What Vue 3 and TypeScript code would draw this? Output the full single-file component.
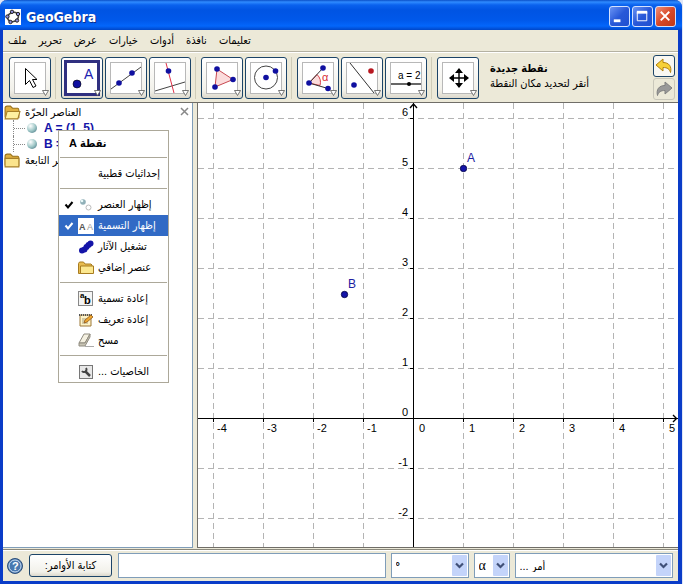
<script setup lang="ts">
import { computed, onBeforeUnmount, onMounted, ref } from 'vue'

interface Tool {
  id: string
  label: string
}

interface MenuEntry {
  id: string
  label: string
  checked?: boolean
  active?: boolean
}

const menus: string[] = ['ملف', 'تحرير', 'عرض', 'خيارات', 'أدوات', 'نافذة', 'تعليمات']

const toolGroups: Tool[][] = [
  [{ id: 'move', label: 'تحريك' }],
  [
    { id: 'point', label: 'نقطة جديدة' },
    { id: 'line', label: 'مستقيم' },
    { id: 'perpendicular', label: 'عمودي' },
  ],
  [
    { id: 'polygon', label: 'مضلع' },
    { id: 'circle', label: 'دائرة' },
  ],
  [
    { id: 'angle', label: 'زاوية' },
    { id: 'mirror', label: 'انعكاس' },
    { id: 'slider', label: 'منزلقة' },
  ],
  [{ id: 'pan', label: 'تحريك اللوحة' }],
]
const selectedTool = ref('point')

const contextSections: MenuEntry[][] = [
  [{ id: 'polar', label: 'إحداثيات قطبية' }],
  [
    { id: 'show', label: 'إظهار العنصر', checked: true },
    { id: 'label', label: 'إظهار التسمية', checked: true, active: true },
    { id: 'trace', label: 'تشغيل الآثار' },
    { id: 'aux', label: 'عنصر إضافي' },
  ],
  [
    { id: 'rename', label: 'إعادة تسمية' },
    { id: 'redefine', label: 'إعادة تعريف' },
    { id: 'erase', label: 'مسح' },
  ],
  [{ id: 'props', label: 'الخاصيات ...' }],
]

// Coordinate system of the drawing pad, in pixels per unit
const unit = 50
const origin = { x: 215, y: 315 }
const px = (x: number): number => origin.x + x * unit
const py = (y: number): number => origin.y - y * unit
const range = (from: number, to: number): number[] =>
  Array.from({ length: Math.max(0, to - from + 1) }, (_, i) => from + i)

const plot = ref<SVGSVGElement | null>(null)
const size = ref({ width: 480, height: 446 })
const gridX = computed(() => range(-4, Math.floor((size.value.width - origin.x - 13) / unit)))
const gridY = computed(() => range(-Math.floor((size.value.height - origin.y - 4) / unit), 6))
const points = [
  { name: 'A', x: 265, y: 65 },
  { name: 'B', x: 146, y: 191 },
]

let observer: ResizeObserver | undefined
function measure(): void {
  const box = plot.value?.getBoundingClientRect()
  if (box) size.value = { width: box.width, height: box.height }
}
onMounted(() => {
  measure()
  observer = new ResizeObserver(measure)
  if (plot.value) observer.observe(plot.value)
})
onBeforeUnmount(() => observer?.disconnect())

const command = ref('')
const degree = ref('°')
const greek = ref('α')
const commandList = ref('cmd')
</script>

<template>
  <div class="window">
    <header class="title-bar">
      <svg class="logo" viewBox="0 0 16 16" aria-hidden="true">
        <rect width="16" height="16" fill="#fff" />
        <ellipse cx="8" cy="8" rx="5.5" ry="4.6" fill="none" stroke="#444" stroke-width="1.6" transform="rotate(-20 8 8)" />
        <g fill="#8c8cdc" stroke="#222" stroke-width="1">
          <circle cx="7" cy="2.8" r="1.7" /><circle cx="13" cy="5" r="1.7" />
          <circle cx="12" cy="11.5" r="1.7" /><circle cx="5.5" cy="13" r="1.7" />
          <circle cx="2.4" cy="7.6" r="1.7" />
        </g>
      </svg>
      <h1>GeoGebra</h1>
      <div class="window-buttons">
        <button type="button" aria-label="تصغير">
          <svg viewBox="0 0 20 20"><rect x="4" y="13" width="7" height="3" fill="#fff" /></svg>
        </button>
        <button type="button" aria-label="تكبير">
          <svg viewBox="0 0 20 20"><path d="M4.5 5.500h10v9h-10z" fill="none" stroke="#fff" /><path d="M4 4h11v3H4z" fill="#fff" /></svg>
        </button>
        <button type="button" class="close" aria-label="إغلاق">
          <svg viewBox="0 0 20 20"><path d="M5 5l9 9M14 5l-9 9" stroke="#fff" stroke-width="2" /></svg>
        </button>
      </div>
    </header>

    <nav class="menu-bar">
      <button v-for="menu in menus" :key="menu" type="button" dir="rtl">{{ menu }}</button>
    </nav>

    <div class="tool-bar">
      <div v-for="(group, g) in toolGroups" :key="g" class="tool-group">
        <button
          v-for="tool in group"
          :key="tool.id"
          type="button"
          class="tool"
          :class="{ selected: tool.id === selectedTool }"
          :aria-label="tool.label"
          @click="selectedTool = tool.id"
        >
          <svg viewBox="0 0 40 40">
            <rect x="4.5" y="4.5" width="31" height="31" fill="#fff" stroke="#b8b8b8" />
            <rect v-if="tool.id === selectedTool" x="3.5" y="3.5" width="33" height="33" fill="#fff" stroke="#303080" stroke-width="3" />
            <path v-if="tool.id === 'move'" d="M15.500 10.500v16l4-4 3.500 7 3-1.500-3.500-6.500h4.500z" fill="#fff" stroke="#000" />
            <template v-else-if="tool.id === 'point'">
              <circle cx="15" cy="26" r="4" fill="#1010a0" stroke="#000" stroke-width=".6" />
              <text x="22" y="21" font-size="14" fill="#2020b0">A</text>
            </template>
            <template v-else-if="tool.id === 'line'">
              <path d="M5 31L35 9" stroke="#444" />
              <circle cx="13" cy="25" r="2.8" fill="#1010a0" /><circle cx="26" cy="15" r="2.8" fill="#1010a0" />
            </template>
            <template v-else-if="tool.id === 'perpendicular'">
              <path d="M5 33l30-9" stroke="#444" /><path d="M16 5l8 30" stroke="#e03048" />
              <circle cx="18.5" cy="13" r="2.8" fill="#1010a0" />
            </template>
            <template v-else-if="tool.id === 'polygon'">
              <path d="M15 11l16 10.500-18 7.500z" fill="#fbdcdc" stroke="#c84850" />
              <circle cx="15" cy="11" r="2.8" fill="#1010a0" /><circle cx="31" cy="21.5" r="2.8" fill="#1010a0" /><circle cx="13" cy="29" r="2.8" fill="#1010a0" />
            </template>
            <template v-else-if="tool.id === 'circle'">
              <circle cx="20" cy="19.5" r="11.5" fill="none" stroke="#444" />
              <circle cx="20" cy="19.5" r="2.8" fill="#1010a0" /><circle cx="29.5" cy="13" r="2.8" fill="#1010a0" />
            </template>
            <template v-else-if="tool.id === 'angle'">
              <path d="M11 25l8-8.500a11 11 0 0 1 3 11z" fill="#fbdcdc" stroke="#d84048" />
              <path d="M25 10L11 25l19 5.500" fill="none" stroke="#333" />
              <circle cx="25" cy="10" r="2.8" fill="#1010a0" /><circle cx="11" cy="25" r="2.8" fill="#1010a0" /><circle cx="30" cy="30.5" r="2.8" fill="#1010a0" />
              <text x="24" y="23" font-size="11" fill="#d83038">α</text>
            </template>
            <template v-else-if="tool.id === 'mirror'">
              <path d="M8 5l24 30" stroke="#333" />
              <circle cx="12" cy="27" r="2.8" fill="#1010a0" /><circle cx="29" cy="13" r="2.8" fill="#b81820" />
            </template>
            <template v-else-if="tool.id === 'slider'">
              <text x="12" y="21" font-size="10" fill="#000">a = 2</text>
              <path d="M5 26h30" stroke="#000" stroke-width="1.2" /><circle cx="23" cy="26" r="2" />
            </template>
            <template v-else>
              <path d="M12 20h18M21 11v18" stroke="#000" stroke-width="1.4" />
              <path d="M11 20l5-4v8zM31 20l-5-4v8zM21 10l-4 5h8zM21 30l-4-5h8z" />
            </template>
            <path d="M32.500 32.500h6l-3 5z" fill="#fff" stroke="#555" stroke-width=".8" />
          </svg>
        </button>
      </div>
      <div class="tool-help" dir="rtl">
        <strong>نقطة جديدة</strong>
        <span>أنقر لتحديد مكان النقطة</span>
      </div>
      <div class="history">
        <button type="button" aria-label="تراجع">
          <svg viewBox="0 0 20 20"><path d="M2 9l7-6v3.500c6 0 9 4 7.500 10-1-3.500-3-5-7.500-5V15z" fill="#f6d038" stroke="#b08010" /></svg>
        </button>
        <button type="button" disabled aria-label="إعادة">
          <svg viewBox="0 0 20 20"><path d="M18 9l-7-6v3.500c-6 0-9 4-7.500 10 1-3.500 3-5 7.500-5V15z" fill="#999" stroke="#808080" /></svg>
        </button>
      </div>
    </div>

    <main class="workspace">
      <aside class="algebra">
        <button type="button" class="close-panel" aria-label="إغلاق">
          <svg viewBox="0 0 9 9"><path d="M1 1l7 7M8 1l-7 7" stroke="#888" stroke-width="1.5" /></svg>
        </button>
        <div class="tree-row">
          <svg class="folder" viewBox="0 0 16 14"><path d="M1 3q0-2 2-2h3l2 2h5q1 0 1 2v7H2q-1 0-1-1z" fill="#e0b040" stroke="#987018" /><path d="M3 6h12l-2 7H1z" fill="#fff0a0" stroke="#a88028" /></svg>
          <span dir="rtl">العناصر الحرّة</span>
        </div>
        <ul class="tree-children">
          <li><i class="marble"></i><b>A = (1, 5)</b></li>
          <li><i class="marble"></i><b>B =</b></li>
        </ul>
        <div class="tree-row">
          <svg class="folder" viewBox="0 0 16 14"><path d="M1 3q0-2 2-2h3l2 2h5q1 0 1 2v7H2q-1 0-1-1z" fill="#e0b040" stroke="#987018" /><path d="M1 5h13v8H1z" fill="#fbe48c" stroke="#a88028" /></svg>
          <span dir="rtl">العناصر التابعة</span>
        </div>

        <div class="context-menu" role="menu">
          <div class="context-title" dir="rtl">نقطة A</div>
          <div v-for="(section, s) in contextSections" :key="s" class="context-section">
            <button
              v-for="entry in section"
              :key="entry.id"
              type="button"
              role="menuitem"
              :class="{ active: entry.active }"
            >
              <svg class="check" viewBox="0 0 10 10"><path v-if="entry.checked" d="M1.500 4.500l2.500 3 4.500-5.500" fill="none" stroke="currentColor" stroke-width="2" /></svg>
              <svg class="entry-icon" viewBox="0 0 16 16">
                <template v-if="entry.id === 'show'">
                  <circle cx="5" cy="5" r="2.8" fill="#90b0b8" /><circle cx="4" cy="4" r="1.3" fill="#e8f8f8" />
                  <circle cx="10.5" cy="10.5" r="2.5" fill="#fff" stroke="#bbb" />
                </template>
                <template v-else-if="entry.id === 'label'">
                  <rect width="16" height="16" fill="#fff" />
                  <text x="1" y="12" font-size="9" font-weight="bold" fill="#555">A</text>
                  <text x="9" y="12" font-size="9" fill="#999">A</text>
                </template>
                <g v-else-if="entry.id === 'trace'" fill="#1414a8">
                  <circle cx="4" cy="11.5" r="3" /><circle cx="6.5" cy="10.5" r="3" /><circle cx="8.5" cy="8" r="3" />
                  <circle cx="10.5" cy="6" r="3" /><circle cx="12.5" cy="4.5" r="3" />
                </g>
                <template v-else-if="entry.id === 'aux'">
                  <path d="M.5 13.500v-10l1-1.500h4l1.500 2H13l1 1v8.500z" fill="#e8bc50" stroke="#a87c20" />
                  <path d="M2.500 6H15.500v7.500h-13z" fill="#fce890" stroke="#a87c20" />
                </template>
                <template v-else-if="entry.id === 'rename'">
                  <rect x=".5" y=".5" width="14" height="14" fill="#f4f4f4" stroke="#888" />
                  <text x="2" y="7" font-size="8" font-weight="bold">a</text>
                  <text x="6" y="13" font-size="11" font-weight="bold">b</text>
                </template>
                <template v-else-if="entry.id === 'redefine'">
                  <path d="M2 3h11v11H2z" fill="#fff4c8" stroke="#9c7838" /><path d="M1 3h13" stroke="#555" stroke-width="2" stroke-dasharray="1 1" />
                  <path d="M4 7h6M4 9h5M4 11h6" stroke="#a8a080" /><path d="M6 11l1-3 6-5 2 2-6 5z" fill="#f0a830" stroke="#905818" stroke-width=".8" />
                </template>
                <template v-else-if="entry.id === 'erase'">
                  <path d="M1 10l5-9h6l-5 9z" fill="#f4f0e0" stroke="#908c80" /><path d="M1 10h6l5-9v3l-5 9H1z" fill="#c8c4b4" stroke="#908c80" /><path d="M7 13.500h9" stroke="#aaa" />
                </template>
                <template v-else-if="entry.id === 'props'">
                  <rect x="1.5" y="1.5" width="13" height="13" fill="#e8e8e8" stroke="#777" />
                  <path d="M7 7l5 5" stroke="#444" stroke-width="2.5" /><path d="M8 4a2.500 2.500 0 1 1-4 3" fill="none" stroke="#444" stroke-width="2" />
                </template>
              </svg>
              <span dir="rtl">{{ entry.label }}</span>
            </button>
          </div>
        </div>
      </aside>

      <section class="graphics">
        <svg ref="plot" class="plot" shape-rendering="crispEdges" role="img" aria-label="A, B">
          <g stroke="#b4b4b4" stroke-dasharray="6 4">
            <line v-for="x in gridX" :key="'x' + x" :x1="px(x) + 0.5" :x2="px(x) + 0.5" y1="0" y2="100%" />
            <line v-for="y in gridY" :key="'y' + y" x1="0" x2="100%" :y1="py(y) + 0.5" :y2="py(y) + 0.5" />
          </g>
          <g stroke="#000">
            <line x1="0" x2="100%" :y1="origin.y + 0.5" :y2="origin.y + 0.5" />
            <line :x1="origin.x + 0.5" :x2="origin.x + 0.5" y1="0" y2="100%" />
            <line v-for="x in gridX" :key="'tx' + x" :x1="px(x) + 0.5" :x2="px(x) + 0.5" :y1="origin.y" :y2="origin.y + 4" />
            <line v-for="y in gridY" :key="'ty' + y" :x1="origin.x - 3" :x2="origin.x" :y1="py(y) + 0.5" :y2="py(y) + 0.5" />
          </g>
          <g fill="none" stroke="#000" stroke-width="1.4" shape-rendering="auto">
            <path d="M212 5l3.500-4 3.500 4" />
            <svg x="100%" :y="origin.y" overflow="visible"><path d="M-5 -3l3.500 3.500-3.500 3.500" /></svg>
          </g>
          <g class="axis-numbers">
            <text v-for="x in gridX" :key="'nx' + x" :x="px(x) + (x < 0 ? 4 : 6)" :y="origin.y + 14">{{ x }}</text>
            <text v-for="y in gridY" :key="'ny' + y" :x="origin.x - 5" :y="py(y) - 2" text-anchor="end">{{ y }}</text>
          </g>
          <g shape-rendering="auto">
            <template v-for="p in points" :key="p.name">
              <circle :cx="p.x + 0.5" :cy="p.y + 0.5" r="3.2" fill="#1414a8" stroke="#000040" stroke-width=".8" />
              <text class="point-name" :x="p.x + 4" :y="p.y - 6">{{ p.name }}</text>
            </template>
          </g>
        </svg>
      </section>
    </main>

    <footer class="input-bar">
      <button type="button" class="help" aria-label="مساعدة">
        <svg viewBox="0 0 16 16"><circle cx="8" cy="8" r="7.5" fill="#4878b0" stroke="#305078" /><circle cx="8" cy="8" r="6" fill="none" stroke="#c8dcf0" /><text x="5" y="12" font-size="11" font-weight="bold" fill="#fff">?</text></svg>
      </button>
      <button type="button" class="command-label" dir="rtl">كتابة الأوامر:</button>
      <input v-model="command" type="text" class="command" aria-label="كتابة الأوامر" />
      <span class="combo degree">
        <select v-model="degree" aria-label="رموز"><option value="°">°</option></select>
        <svg viewBox="0 0 15 21"><rect width="15" height="21" rx="1" fill="#c4d4fa" /><path d="M4 8.500l3.500 3.500L11 8.500" fill="none" stroke="#405078" stroke-width="2.2" /></svg>
      </span>
      <span class="combo greek">
        <select v-model="greek" aria-label="حروف"><option value="α">α</option></select>
        <svg viewBox="0 0 15 21"><rect width="15" height="21" rx="1" fill="#c4d4fa" /><path d="M4 8.500l3.500 3.500L11 8.500" fill="none" stroke="#405078" stroke-width="2.2" /></svg>
      </span>
      <span class="combo commands">
        <select v-model="commandList" aria-label="أمر"><option value="cmd">&rlm;أمر ...&rlm;</option></select>
        <svg viewBox="0 0 15 21"><rect width="15" height="21" rx="1" fill="#c4d4fa" /><path d="M4 8.500l3.500 3.500L11 8.500" fill="none" stroke="#405078" stroke-width="2.2" /></svg>
      </span>
    </footer>
  </div>
</template>

<style>
body {
  background: #dfe6f6;
}
</style>

<style scoped>
.window {
  display: flex;
  flex-direction: column;
  box-sizing: border-box;
  min-height: 100vh;
  margin-right: 1px;
  border: solid #0a3cc8;
  border-width: 0 4px 3px 3px;
  border-radius: 7px 7px 0 0;
  background: #ece9d8;
  color: #000;
  font-family: "Liberation Sans", "DejaVu Sans Condensed", "DejaVu Sans", sans-serif;
  font-size: 11px;
}
button,
input,
select {
  box-sizing: border-box;
  margin: 0;
  padding: 0;
  border: 0;
  border-radius: 0;
  background: none;
  color: inherit;
  font: inherit;
}
svg {
  display: block;
  flex: none;
}
.title-bar {
  display: flex;
  align-items: center;
  gap: 5px;
  height: 30px;
  box-sizing: border-box;
  margin: 0 -4px 0 -3px;
  padding: 3px 6px 0 5px;
  border-radius: 7px 7px 0 0;
  background: linear-gradient(#0a50c8 0, #2f8bff 2px, #0a62ee 5px, #0054e3 10px, #0058ea 20px, #0366fb 26px, #0046c8 30px);
}
.logo {
  width: 16px;
  height: 16px;
}
h1 {
  flex: 1;
  margin: 0;
  color: #fff;
  font: bold 14px "DejaVu Sans Condensed", "DejaVu Sans", sans-serif;
  text-shadow: 1px 1px #0a3090;
}
.window-buttons {
  display: flex;
  gap: 2px;
}
.window-buttons button {
  width: 21px;
  height: 21px;
  border: 1px solid #d4e2ff;
  border-radius: 3px;
  background: linear-gradient(135deg, #6a94f4, #2858d8 50%, #2050d0);
}
.window-buttons .close {
  background: linear-gradient(135deg, #f09078, #d84828 50%, #c03818);
}
.menu-bar {
  display: flex;
  align-items: center;
  gap: 12px;
  height: 21px;
  padding: 0 5px;
  border-bottom: 1px solid #b4b1a2;
}
.tool-bar {
  display: flex;
  align-items: center;
  height: 49px;
  padding: 0 3px 0 6px;
  border-top: 1px solid #fff;
  border-bottom: 1px solid #706e68;
}
.tool-group {
  display: flex;
  gap: 2px;
}
.tool-group + .tool-group {
  margin-left: 4px;
  padding-left: 5px;
  border-left: 1px solid #cfccb8;
}
.tool {
  width: 42px;
  height: 42px;
  border: 1px solid #1c4468;
  border-radius: 3px;
  background: linear-gradient(#fff, #f2f1ea 80%, #dcd8cc);
}
.tool-help {
  display: flex;
  flex: 1;
  flex-direction: column;
  align-items: flex-end;
  margin-left: 11px;
  padding-bottom: 4px;
  line-height: 15px;
  white-space: nowrap;
}
.history {
  display: flex;
  flex-direction: column;
  gap: 1px;
}
.history button {
  width: 22px;
  height: 22px;
  border: 1px solid #1c4468;
  border-radius: 3px;
  background: #f8f7f2;
}
.history button:disabled {
  border-color: #c9c7ba;
  background: #ece9d8;
}
.workspace {
  display: flex;
  flex: 1;
  padding-bottom: 1px;
}
.algebra {
  position: relative;
  box-sizing: border-box;
  width: 190px;
  padding: 1px 1px 0;
  border: solid #7f9db9;
  border-width: 0 1px 1px 0;
  background: #fff;
}
.close-panel {
  position: absolute;
  top: 4px;
  right: 3px;
}
.close-panel svg {
  width: 9px;
  height: 9px;
}
.tree-row {
  display: flex;
  align-items: center;
  gap: 4px;
  height: 16px;
}
.folder {
  width: 17px;
  height: 15px;
}
.tree-children {
  margin: 0 0 0 9px;
  padding: 0;
  list-style: none;
}
.tree-children li {
  display: flex;
  align-items: center;
  height: 16px;
  border-left: 1px dotted #888;
  color: #1414a8;
  font-size: 12px;
}
.tree-children li::before {
  width: 11px;
  border-top: 1px dotted #888;
  content: "";
}
.marble {
  width: 10px;
  height: 10px;
  margin: 0 7px 0 2px;
  border-radius: 50%;
  background: radial-gradient(circle at 35% 30%, #fff, #a0c8c8 50%, #386878);
}
.context-menu {
  position: absolute;
  top: 27px;
  left: 55px;
  box-sizing: border-box;
  width: 111px;
  border: 1px solid #aca899;
  background: #fff;
}
.context-title {
  height: 22px;
  padding: 0 0 0 10px;
  font-weight: bold;
  line-height: 24px;
  text-align: left;
}
.context-section::before {
  display: block;
  height: 1px;
  margin: 4px 1px 5px;
  background: #aca899;
  content: "";
}
.context-section button {
  display: flex;
  align-items: center;
  width: 100%;
  height: 21px;
  padding-left: 5px;
  white-space: nowrap;
}
.context-section .active {
  background: #316ac5;
  color: #fff;
}
.check {
  width: 10px;
  height: 10px;
}
.entry-icon {
  width: 16px;
  height: 16px;
  margin: 0 4px;
}
.graphics {
  display: flex;
  flex: 1;
  min-width: 0;
  margin-left: 4px;
  border: solid #706e68;
  border-width: 0 0 1px 1px;
  background: #fff;
}
.plot {
  flex: 1;
  min-width: 0;
  height: auto;
}
.axis-numbers {
  font-size: 11px;
}
.point-name {
  fill: #2020a0;
  font-size: 12px;
}
.input-bar {
  display: flex;
  align-items: center;
  height: 31px;
  padding: 0 5px 0 4px;
  border-top: 1px solid #8a887c;
  box-shadow: inset 0 1px #fff;
}
.help svg {
  width: 16px;
  height: 16px;
}
.command-label {
  width: 83px;
  height: 23px;
  margin: 0 6px;
  border: 1px solid #1c4468;
  border-radius: 3px;
  background: linear-gradient(#fff, #f2f1ea 80%, #dcd8cc);
}
.command,
.combo select {
  height: 25px;
  border: 1px solid #7f9db9;
  background: #fff;
}
.command {
  flex: 268;
  min-width: 0;
}
.combo {
  position: relative;
  margin-left: 5px;
}
.combo select {
  width: 100%;
  padding: 0 18px 0 4px;
  appearance: none;
}
.combo svg {
  position: absolute;
  top: 2px;
  right: 2px;
  width: 15px;
  height: 21px;
  pointer-events: none;
}
.degree {
  width: 78px;
}
.degree select {
  font-weight: bold;
}
.greek {
  width: 36px;
}
.greek select {
  font-family: "Liberation Serif", serif;
  font-size: 14px;
}
.commands {
  flex: 160;
}
</style>
